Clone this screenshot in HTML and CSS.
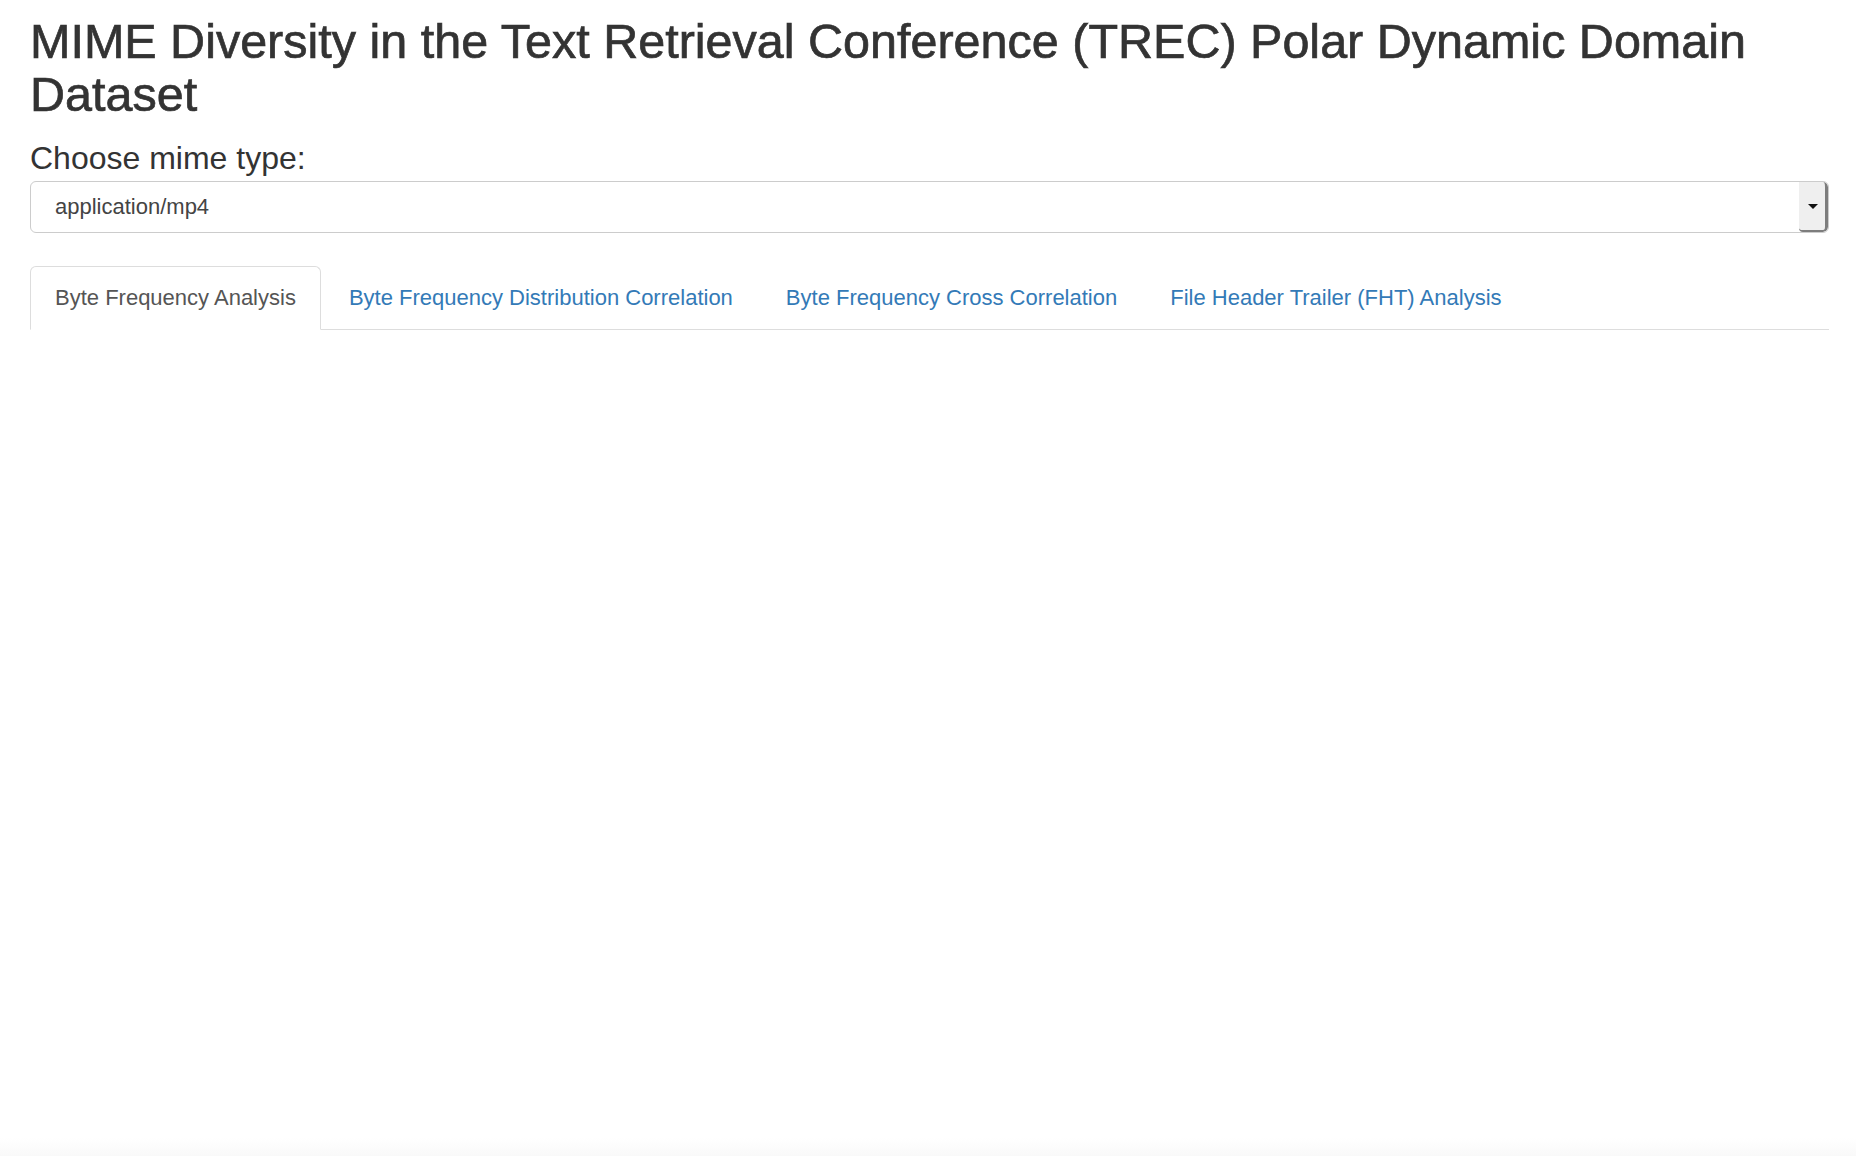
FILE: index.html
```html
<!DOCTYPE html>
<html lang="en">
<head>
<meta charset="utf-8">
<title>MIME Diversity in the TREC Polar Dynamic Domain Dataset</title>
<link rel="stylesheet" href="styles.css">
</head>
<body>
<div class="container">
  <h1 class="title">MIME Diversity in the Text Retrieval Conference (TREC) Polar Dynamic Domain Dataset</h1>
  <div class="form-group">
    <label class="control-label" for="mime">Choose mime type:</label>
    <div class="select" id="mime">
      <div class="select-value">application/mp4</div>
      <div class="select-btn"><span class="caret"></span></div>
    </div>
  </div>
  <ul class="nav-tabs">
    <li class="tab active"><a href="#bfa">Byte Frequency Analysis</a></li>
    <li class="tab"><a href="#bfdc">Byte Frequency Distribution Correlation</a></li>
    <li class="tab"><a href="#bfcc">Byte Frequency Cross Correlation</a></li>
    <li class="tab"><a href="#fht">File Header Trailer (FHT) Analysis</a></li>
  </ul>
  <div class="tab-content"></div>
</div>
</body>
</html>
```
FILE: styles.css
```css
html, body {
  margin: 0;
  padding: 0;
  background: #ffffff;
}

body {
  font-family: "Liberation Sans", Arial, Helvetica, sans-serif;
  color: #333333;
  min-height: 1156px;
  background: linear-gradient(to bottom, #ffffff 0, #ffffff 1138px, #f9f9f9 1156px);
}

.container {
  padding: 0 27px 0 30px;
}

.title {
  margin: 15px 0 0 0;
  font-size: 48.5px;
  line-height: 53px;
  font-weight: 500;
  color: #333333;
  -webkit-text-stroke: 0.7px #333333;
}

.form-group {
  margin-top: 19px;
}

.control-label {
  display: block;
  font-size: 32px;
  line-height: 36px;
  font-weight: normal;
  color: #333333;
  margin-bottom: 5px;
}

.select {
  display: flex;
  align-items: stretch;
  height: 52px;
  box-sizing: border-box;
  border: 1px solid #cccccc;
  border-radius: 6px;
  background: #ffffff;
  overflow: hidden;
}

.select-value {
  flex: 1;
  display: flex;
  align-items: center;
  padding-left: 24px;
  font-size: 22px;
  color: #444444;
}

.select-btn {
  width: 26px;
  background: #efefef;
  border-right: 3px solid #7d7d7d;
  border-bottom: 2px solid #7d7d7d;
  border-radius: 0 5px 5px 4px;
  display: flex;
  align-items: center;
  justify-content: center;
}

.caret {
  width: 0;
  height: 0;
  border-left: 5px solid transparent;
  border-right: 5px solid transparent;
  border-top: 5px solid #111111;
  margin-left: 2px;
}

.nav-tabs {
  list-style: none;
  margin: 33px 0 0 0;
  padding: 0;
  display: flex;
  border-bottom: 1px solid #dddddd;
}

.tab {
  margin-bottom: -1px;
}

.tab a {
  display: block;
  padding: 15px 24px;
  line-height: 32px;
  font-size: 22px;
  margin-right: 3px;
  border: 1px solid transparent;
  border-radius: 6px 6px 0 0;
  color: #337ab7;
  text-decoration: none;
}

.tab.active a {
  color: #555555;
  background: #ffffff;
  border-color: #dddddd #dddddd transparent #dddddd;
}

.tab-content {
  min-height: 400px;
}
```
